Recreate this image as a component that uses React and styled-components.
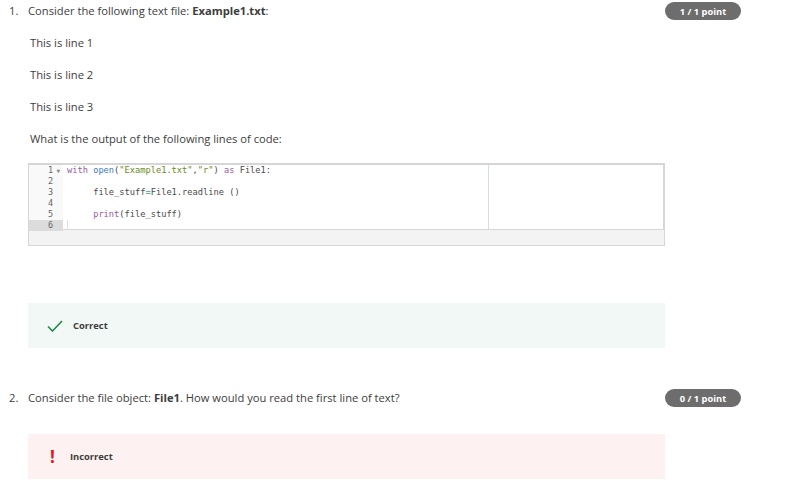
import React from "react";
import styled, { createGlobalStyle } from "styled-components";

const Global = createGlobalStyle`
  html, body { margin: 0; padding: 0; background: #fff; }
  body { font-family: "Open Sans", "Noto Sans", sans-serif; color: #3d3d3d; }
`;

const Page = styled.div`
  width: 788px;
  padding-top: 2px;
`;

const Question = styled.section`
  display: grid;
  grid-template-columns: 665px 76px;
  margin-bottom: ${(p) => p.$gap || 0}px;
`;

const Content = styled.div`
  display: flex;
  flex-direction: column;
`;

const Header = styled.div`
  display: flex;
  align-items: center;
  height: 17px;
  font-size: 11.2px;
`;

const Num = styled.span`
  width: 28px;
  padding-left: 9px;
  box-sizing: border-box;
`;

const Body = styled.div`
  padding-left: 28px;
  display: flex;
  flex-direction: column;
`;

const Para = styled.p`
  margin: 0;
  margin-top: 16px;
  line-height: 16px;
  font-size: 11.2px;
  padding-left: 2px;
`;

const Badge = styled.div`
  height: 18px;
  border-radius: 9px;
  background: #6d6d6d;
  color: #fff;
  font-size: 9.3px;
  font-weight: 700;
  display: flex;
  align-items: center;
  justify-content: center;
`;

const Editor = styled.div`
  margin-top: 16px;
  width: 637px;
  border: 1px solid #d6d6d6;
  border-top-width: 2px;
  box-sizing: border-box;
`;

const EditArea = styled.div`
  display: flex;
  height: 64px;
  border-right: 1px solid #d6d6d6;
  position: relative;
`;

const Gutter = styled.div`
  width: 34px;
  background: #f9f9f9;
  display: flex;
  flex-direction: column;
`;

const GutterCell = styled.div`
  height: 11px;
  line-height: 11px;
  font-family: "DejaVu Sans Mono", monospace;
  font-size: 8.5px;
  color: #666;
  text-align: right;
  padding-right: 10px;
  position: relative;
  background: ${(p) => (p.$active ? "#dcdcdc" : "transparent")};
`;

const Fold = styled.span`
  position: absolute;
  right: 3px;
  top: 0;
  font-size: 6px;
  color: #888;
`;

const Code = styled.pre`
  margin: 0;
  padding-left: 4px;
  flex: 1;
  font-family: "DejaVu Sans Mono", monospace;
  font-size: 8.7px;
  color: #4a4a4a;
`;

const Line = styled.div`
  height: 11px;
  line-height: 11px;
  white-space: pre;
`;

const Cursor = styled.span`
  display: inline-block;
  width: 1px;
  height: 10px;
  background: #e2e2e2;
  vertical-align: top;
`;

const Margin = styled.div`
  position: absolute;
  left: 459px;
  top: 0;
  bottom: 0;
  width: 1px;
  background: #d3dde8;
`;

const Kw = styled.span`color: #9b59a8;`;
const Fn = styled.span`color: #3b7dbf;`;
const Str = styled.span`color: #6b8a22;`;
const Op = styled.span`color: #2aa6a6;`;

const StatusBar = styled.div`
  height: 15px;
  background: #f3f3f3;
  border-top: 1px solid #d6d6d6;
`;

const Feedback = styled.div`
  width: 637px;
  height: 45px;
  margin-top: ${(p) => p.$top}px;
  background: ${(p) => (p.$ok ? "#f2f8f5" : "#fdf1f2")};
  display: flex;
  align-items: center;
  box-sizing: border-box;
  padding-left: ${(p) => (p.$ok ? 19 : 22)}px;
  gap: ${(p) => (p.$ok ? 10 : 15)}px;
`;

const FbLabel = styled.span`
  font-size: 9.4px;
  font-weight: 700;
  color: #3d3d3d;
`;

const Bang = styled.span`
  color: #e0161b;
  font-weight: 700;
  font-size: 17px;
  line-height: 17px;
  font-family: "Open Sans", sans-serif;
`;

const lines = [
  <><Kw>with</Kw> <Fn>open</Fn>(<Str>"Example1.txt"</Str>,<Str>"r"</Str>) <Kw>as</Kw> File1:</>,
  <></>,
  <>{"     "}file_stuff<Op>=</Op>File1.readline ()</>,
  <></>,
  <>{"     "}<Kw>print</Kw>(file_stuff)</>,
  <><Cursor /></>,
];

export default function App() {
  return (
    <Page>
      <Global />
      <Question $gap={41}>
        <Content>
          <Header>
            <Num>1.</Num>
            <span>Consider the following text file: <b>Example1.txt</b>:</span>
          </Header>
          <Body>
            <Para>This is line 1</Para>
            <Para>This is line 2</Para>
            <Para>This is line 3</Para>
            <Para>What is the output of the following lines of code:</Para>
            <Editor>
              <EditArea>
                <Gutter>
                  {lines.map((_, i) => (
                    <GutterCell key={i} $active={i === 5}>
                      {i + 1}
                      {i === 0 && <Fold>▼</Fold>}
                    </GutterCell>
                  ))}
                </Gutter>
                <Code>
                  {lines.map((l, i) => (
                    <Line key={i}>{l}</Line>
                  ))}
                </Code>
                <Margin />
              </EditArea>
              <StatusBar />
            </Editor>
            <Feedback $ok $top={57}>
              <svg width="16" height="12" viewBox="0 0 16 12">
                <path d="M1 6.5 L5.5 11 L15 1" fill="none" stroke="#1f8a4c" strokeWidth="1.6" />
              </svg>
              <FbLabel>Correct</FbLabel>
            </Feedback>
          </Body>
        </Content>
        <Badge>1 / 1 point</Badge>
      </Question>
      <Question>
        <Content>
          <Header>
            <Num>2.</Num>
            <span>Consider the file object: <b>File1</b>. How would you read the first line of text?</span>
          </Header>
          <Body>
            <Feedback $top={28}>
              <Bang>!</Bang>
              <FbLabel>Incorrect</FbLabel>
            </Feedback>
          </Body>
        </Content>
        <Badge>0 / 1 point</Badge>
      </Question>
    </Page>
  );
}
